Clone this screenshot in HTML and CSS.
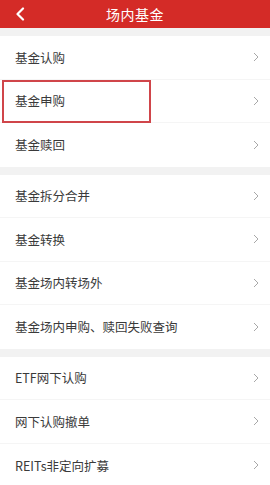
FILE: index.html
```html
<!DOCTYPE html>
<html lang="zh-CN">
<head>
    <meta charset="UTF-8">
    <meta name="viewport" content="width=device-width, initial-scale=1.0">
    <title>场内基金</title>
    <link rel="stylesheet" href="styles.css">
</head>
<body>
    <div class="header">
        <svg class="back" width="12" height="14" viewBox="0 0 12 14">
            <path d="M9 1.5 L3.5 7 L9 12.5" fill="none" stroke="#fff" stroke-width="2.2" stroke-linecap="round" stroke-linejoin="round"/>
        </svg>
        <div class="title">场内基金</div>
    </div>

    <div class="section">
        <div class="row"><span>基金认购</span><svg class="arrow" viewBox="0 0 6 10"><path d="M1 1 L5 5 L1 9"/></svg></div>
        <div class="row"><span>基金申购</span><svg class="arrow" viewBox="0 0 6 10"><path d="M1 1 L5 5 L1 9"/></svg><b class="mark"></b></div>
        <div class="row"><span>基金赎回</span><svg class="arrow" viewBox="0 0 6 10"><path d="M1 1 L5 5 L1 9"/></svg></div>
    </div>

    <div class="section">
        <div class="row"><span>基金拆分合并</span><svg class="arrow" viewBox="0 0 6 10"><path d="M1 1 L5 5 L1 9"/></svg></div>
        <div class="row"><span>基金转换</span><svg class="arrow" viewBox="0 0 6 10"><path d="M1 1 L5 5 L1 9"/></svg></div>
        <div class="row"><span>基金场内转场外</span><svg class="arrow" viewBox="0 0 6 10"><path d="M1 1 L5 5 L1 9"/></svg></div>
        <div class="row"><span>基金场内申购、赎回失败查询</span><svg class="arrow" viewBox="0 0 6 10"><path d="M1 1 L5 5 L1 9"/></svg></div>
    </div>

    <div class="section">
        <div class="row"><span>ETF网下认购</span><svg class="arrow" viewBox="0 0 6 10"><path d="M1 1 L5 5 L1 9"/></svg></div>
        <div class="row"><span>网下认购撤单</span><svg class="arrow" viewBox="0 0 6 10"><path d="M1 1 L5 5 L1 9"/></svg></div>
        <div class="row"><span>REITs非定向扩募</span><svg class="arrow" viewBox="0 0 6 10"><path d="M1 1 L5 5 L1 9"/></svg></div>
    </div>
</body>
</html>
```

FILE: styles.css
```css
body {
    margin: 0;
    background-color: #f2f2f2;
    font-family: "Noto Sans CJK SC", "Noto Sans", sans-serif;
    color: #3a3a3a;
}
.header {
    height: 28px;
    background-color: #d42b27;
    display: flex;
    align-items: center;
    justify-content: center;
    position: relative;
    margin-bottom: 8px;
}
.header .back {
    position: absolute;
    left: 14px;
    top: 7px;
}
.title {
    color: #fff;
    font-size: 14px;
    letter-spacing: 0.5px;
}
.section {
    background-color: #fff;
    margin-bottom: 8px;
}
.row {
    height: 43.5px;
    box-sizing: border-box;
    display: flex;
    align-items: center;
    justify-content: space-between;
    padding: 0 11px 0 15px;
    border-bottom: 1px solid #f5f5f5;
    font-size: 12.5px;
    position: relative;
}
.row:last-child {
    border-bottom: none;
}
.arrow {
    width: 6px;
    height: 10px;
    fill: none;
    stroke: #a8a8a8;
    stroke-width: 1;
}
/* 标注框 */
.mark {
    position: absolute;
    left: 2px;
    top: 0;
    width: 149px;
    height: 43px;
    box-sizing: border-box;
    border: 2px solid #d0454a;
}
```
